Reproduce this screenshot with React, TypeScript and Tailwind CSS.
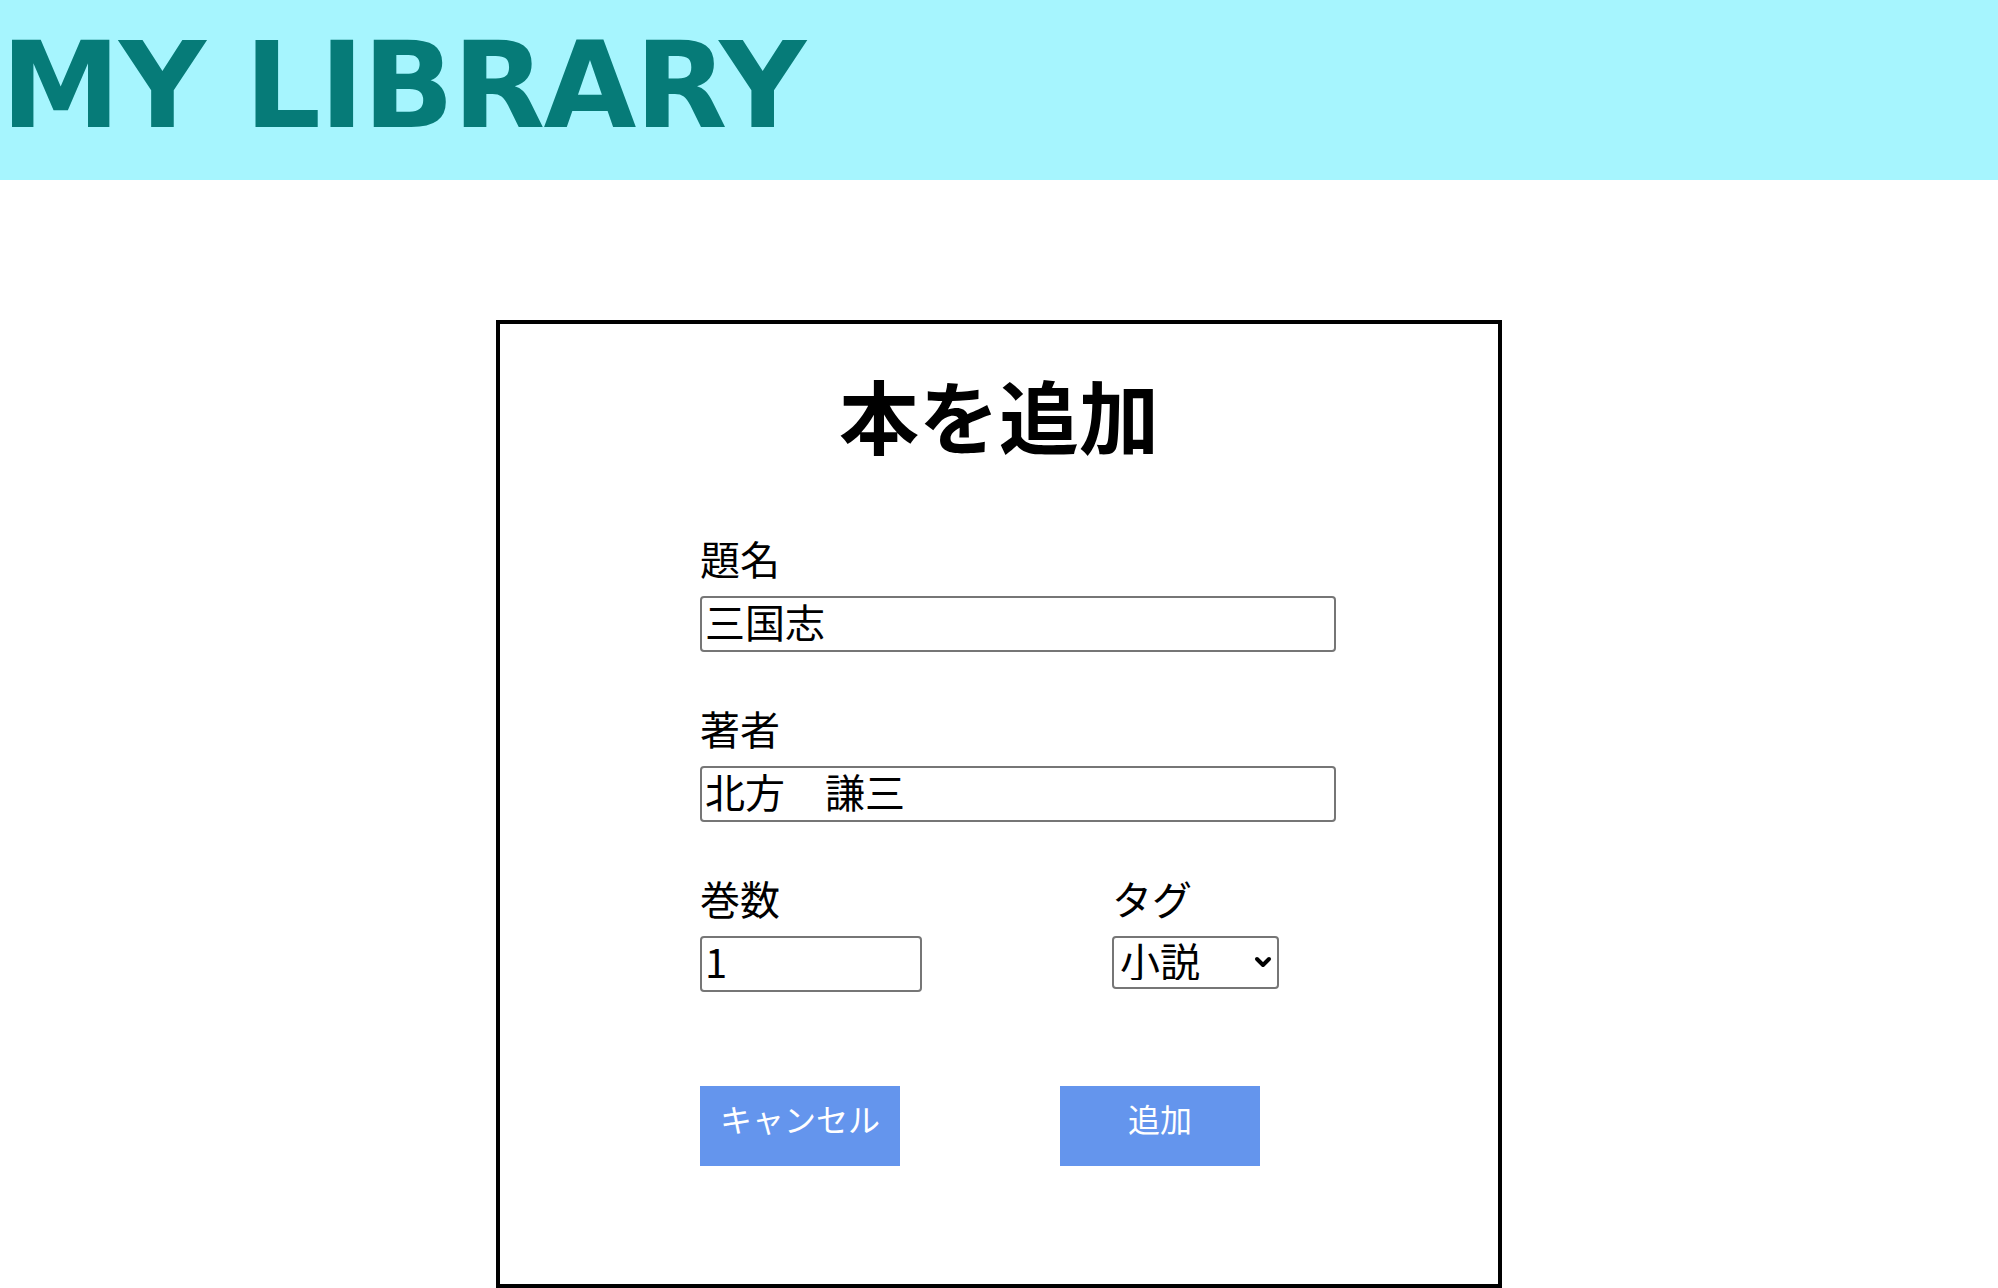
import { useState } from 'react'

const jp = "font-['Noto_Sans_CJK_JP',sans-serif]"

interface FieldProps {
  label: string
  value: string
  width: string
}

const inputCls =
  "h-[56px] rounded-[4px] border-2 border-[#767676] bg-white pb-[7px] pl-[3px] text-[40px] leading-[40px] text-black outline-none font-['Noto_Sans_CJK_JP',sans-serif]"

const Field = ({ label, value, width }: FieldProps) => {
  const [text, setText] = useState(value)
  return (
    <div className="flex flex-col">
      <label className="text-[40px] leading-[40px]">{label}</label>
      <input
        value={text}
        onChange={(e) => setText(e.target.value)}
        className={`mt-[18px] ${width} ${inputCls}`}
      />
    </div>
  )
}

const App = () => {
  const [tag, setTag] = useState('novel')

  return (
    <div className={`min-h-[1288px] bg-white text-black ${jp}`}>
      <header className="h-[180px] bg-[#a6f5fe]">
        <h1 className="pl-px pt-[26px] font-['DejaVu_Sans',sans-serif] text-[120px] font-bold leading-none tracking-[-1.5px] text-[#067b78]">
          MY LIBRARY
        </h1>
      </header>

      <div className="mx-auto mt-[140px] h-[968px] w-[1006px] border-4 border-black">
        <h2 className="mt-[49px] text-center text-[80px] font-bold leading-[80px]">
          本を追加
        </h2>

        <form
          className="mt-[85px] flex flex-col pl-[200px]"
          onSubmit={(e) => e.preventDefault()}>
          <div className="flex flex-col gap-[56px]">
            <Field label="題名" value="三国志" width="w-[636px]" />
            <Field label="著者" value="北方　謙三" width="w-[636px]" />
            <div className="flex">
              <div className="w-[412px]">
                <Field label="巻数" value="1" width="w-[222px]" />
              </div>
              <div className="flex flex-col">
                <label className="text-[40px] leading-[40px]">タグ</label>
                <div className="relative mt-[18px] w-[167px]">
                  <select
                    value={tag}
                    onChange={(e) => setTag(e.target.value)}
                    className="h-[53px] w-full appearance-none rounded-[4px] border-2 border-[#767676] bg-white pb-[5px] pl-[6px] text-[40px] leading-[40px] text-black outline-none">
                    <option value="novel">小説</option>
                    <option value="manga">漫画</option>
                    <option value="essay">エッセイ</option>
                  </select>
                  <svg
                    viewBox="0 0 18 12"
                    className="pointer-events-none absolute right-[7px] top-[20px] h-[12px] w-[18px]"
                    fill="none"
                    stroke="black"
                    strokeWidth="4"
                    strokeLinecap="round"
                    strokeLinejoin="round">
                    <polyline points="3,3 9,9 15,3" />
                  </svg>
                </div>
              </div>
            </div>
          </div>

          <div className="mt-[94px] flex gap-[160px]">
            <button
              type="button"
              className="h-[80px] w-[200px] bg-[#6495ed] pb-[32px] pt-[16px] text-[32px] leading-[32px] text-white">
              キャンセル
            </button>
            <button
              type="submit"
              className="h-[80px] w-[200px] bg-[#6495ed] pb-[32px] pt-[16px] text-[32px] leading-[32px] text-white">
              追加
            </button>
          </div>
        </form>
      </div>
    </div>
  )
}

export default App
